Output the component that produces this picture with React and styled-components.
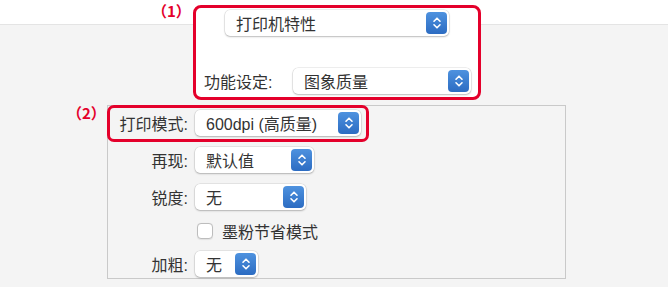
import React from 'react';
import styled, { createGlobalStyle } from 'styled-components';

const GlobalStyle = createGlobalStyle`
  html, body {
    margin: 0;
    padding: 0;
  }
  body {
    font-family: "Liberation Sans", "Noto Sans CJK SC", sans-serif;
    color: #333;
  }
`;

const Page = styled.div`
  width: 668px;
  height: 287px;
  overflow: hidden;
  padding-top: 5px;
  box-sizing: border-box;
  background: linear-gradient(
    #ffffff 0 24px,
    #e4e4e4 24px 25px,
    #f4f4f4 25px
  );
`;

const Callout = styled.div`
  position: absolute;
  left: ${(p) => p.$left}px;
  top: ${(p) => p.$top}px;
  color: #e4002b;
  font-family: "Noto Sans CJK SC", sans-serif;
  font-weight: 700;
  font-size: 15px;
  line-height: 15px;
  white-space: nowrap;
`;

const Header = styled.div`
  position: relative;
  box-sizing: border-box;
  margin-left: 193px;
  width: 288px;
  height: 95px;
  padding-top: 2px;
  border: 3px solid #e4002b;
  border-radius: 8px;
  background: #fff;
  display: flex;
  flex-direction: column;
`;

const HeaderRow = styled.div`
  display: grid;
  grid-template-columns: ${(p) => (p.$label ? '78px auto' : 'auto')};
  column-gap: 11px;
  align-items: center;
  justify-items: start;
  margin-left: ${(p) => p.$indent}px;
  margin-top: ${(p) => p.$top || 0}px;
`;

const Panel = styled.div`
  position: relative;
  box-sizing: border-box;
  margin: 5px 0 0 107px;
  width: 459px;
  height: 174px;
  padding-top: 4px;
  border: 1px solid #c9c9c9;
  background: #f4f4f4;
  display: flex;
  flex-direction: column;
  gap: 11px;
`;

const Highlight = styled.div`
  position: absolute;
  left: -1px;
  top: -1px;
  width: 262px;
  height: 37px;
  box-sizing: border-box;
  border: 3px solid #e4002b;
  border-radius: 7px;
  pointer-events: none;
`;

const Row = styled.div`
  display: grid;
  grid-template-columns: 80px auto;
  column-gap: 7px;
  align-items: center;
  justify-items: start;
  height: 26px;
`;

const Label = styled.span`
  justify-self: ${(p) => (p.$start ? 'start' : 'end')};
  font-size: 16px;
  color: #333;
  white-space: nowrap;
`;

const PopupBox = styled.div`
  box-sizing: border-box;
  width: ${(p) => p.$width}px;
  height: 26px;
  padding: 0 2px 0 11px;
  background: #fff;
  border-radius: 5px;
  box-shadow: 0 0 0 0.5px rgba(0, 0, 0, 0.12), 0 1px 2px rgba(0, 0, 0, 0.22);
  display: flex;
  align-items: center;
  justify-content: space-between;
`;

const PopupText = styled.span`
  font-size: 16px;
  color: #333;
  white-space: nowrap;
`;

const Stepper = styled.span`
  width: 21px;
  height: 22px;
  border-radius: 4px;
  background: linear-gradient(#4e92df, #2c6cc2);
  display: flex;
  align-items: center;
  justify-content: center;
`;

const CheckRow = styled.label`
  display: flex;
  align-items: center;
  gap: 9px;
  height: 19px;
  margin-left: 89px;
  font-size: 16px;
  color: #333;
`;

const Checkbox = styled.span`
  box-sizing: border-box;
  width: 16px;
  height: 16px;
  border-radius: 4px;
  background: #fff;
  border: 1px solid #bdbdbd;
  box-shadow: 0 0.5px 1px rgba(0, 0, 0, 0.08);
`;

function Arrows() {
  return (
    <svg width="10" height="14" viewBox="0 0 10 14" fill="none">
      <path
        d="M2 5.2 L5 2.2 L8 5.2 M2 8.8 L5 11.8 L8 8.8"
        stroke="#fff"
        strokeWidth="1.6"
        strokeLinecap="round"
        strokeLinejoin="round"
      />
    </svg>
  );
}

function Popup({ width, children }) {
  return (
    <PopupBox $width={width}>
      <PopupText>{children}</PopupText>
      <Stepper>
        <Arrows />
      </Stepper>
    </PopupBox>
  );
}

function App() {
  return (
    <Page>
      <GlobalStyle />
      <Header>
        <Callout $left={-44} $top={-5}>（1）</Callout>
        <HeaderRow $indent={29}>
          <Popup width={224}>打印机特性</Popup>
        </HeaderRow>
        <HeaderRow $indent={8} $top={32} $label>
          <Label $start>功能设定:</Label>
          <Popup width={178}>图象质量</Popup>
        </HeaderRow>
      </Header>

      <Panel>
        <Highlight>
          <Callout $left={-43} $top={-3}>（2）</Callout>
        </Highlight>
        <Row>
          <Label>打印模式:</Label>
          <Popup width={166}>600dpi (高质量)</Popup>
        </Row>
        <Row>
          <Label>再现:</Label>
          <Popup width={119}>默认值</Popup>
        </Row>
        <Row>
          <Label>锐度:</Label>
          <Popup width={111}>无</Popup>
        </Row>
        <CheckRow>
          <Checkbox />
          墨粉节省模式
        </CheckRow>
        <Row>
          <Label>加粗:</Label>
          <Popup width={63}>无</Popup>
        </Row>
      </Panel>
    </Page>
  );
}

export default App;
